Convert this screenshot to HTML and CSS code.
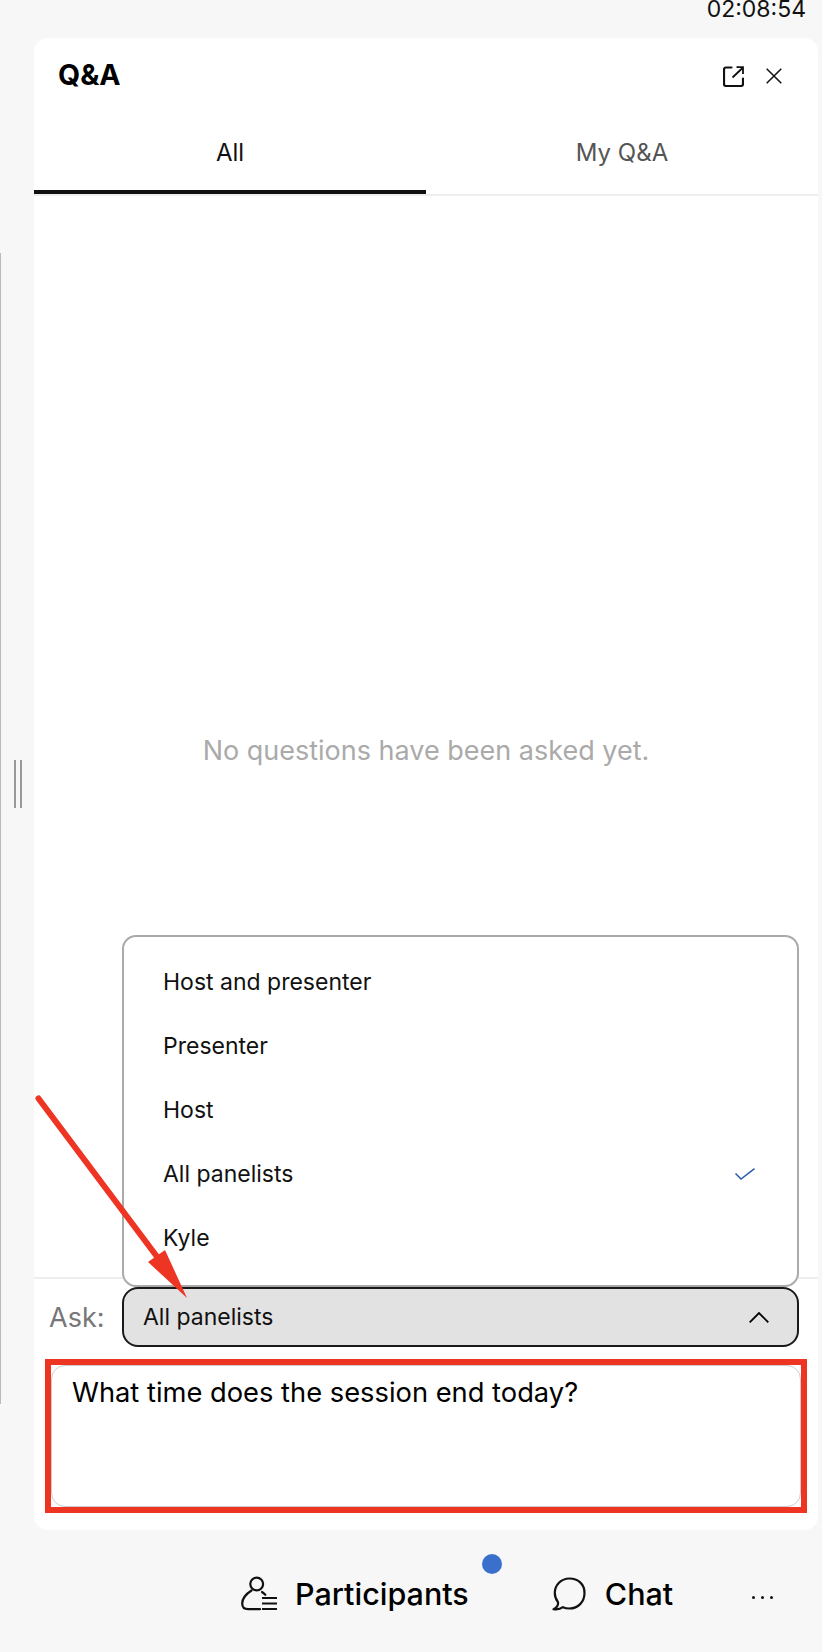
FILE: index.html
```html
<!DOCTYPE html>
<html lang="en">
  <head>
    <meta charset="UTF-8" />
    <meta name="viewport" content="width=device-width, initial-scale=1.0" />
    <title>Q&amp;A</title>
    <link rel="stylesheet" href="styles.css">
  </head>
  <body>
    <div class="timer"><span>02:08:54</span></div>

    <div class="main">
      <div class="side-rail">
        <div class="grip"></div>
      </div>

      <div class="panel">
        <div class="panel-header">
          <h1>Q&amp;A</h1>
          <div class="panel-actions">
            <svg class="popout-icon" viewBox="0 0 21 21" fill="none" stroke="#111" stroke-width="2.200">
              <path d="M8.500 1.500H3a2 2 0 0 0-2 2V18a2 2 0 0 0 2 2h15a2 2 0 0 0 2-2v-5.500" stroke-linecap="round" />
              <path d="M9.500 11.500 19.500 2M13.500 1.200H20V8" stroke-width="1.800" />
            </svg>
            <svg class="close-icon" viewBox="0 0 16 16" fill="none" stroke="#111" stroke-width="1.500">
              <path d="M.7.7l14.600 14.600M15.300.7.700 15.300" />
            </svg>
          </div>
        </div>

        <div class="tabs">
          <div class="tab active">All</div>
          <div class="tab">My Q&amp;A</div>
        </div>

        <div class="question-list">
          <p>No questions have been asked yet.</p>
        </div>

        <div class="ask-row">
          <ul class="ask-menu">
            <li>Host and presenter</li>
            <li>Presenter</li>
            <li>Host</li>
            <li>
              All panelists
              <svg class="check-icon" viewBox="0 0 20 12" fill="none" stroke="#2a5caa" stroke-width="1.500">
                <path d="M.5 5.500 6 11 19.500.7" />
              </svg>
            </li>
            <li>Kyle</li>
          </ul>
          <span class="ask-label">Ask:</span>
          <div class="ask-select">
            <span>All panelists</span>
            <svg class="chevron-icon" viewBox="0 0 20 11" fill="none" stroke="#000" stroke-width="1.800">
              <path d="M.7 10.300 10 1l9.300 9.300" />
            </svg>
          </div>
        </div>

        <div class="highlight-box">
          <div class="question-input">What time does the session end today?</div>
        </div>
      </div>
    </div>

    <div class="toolbar">
      <div class="tool-item">
        <svg class="participants-icon" viewBox="0 0 36 36" fill="none" stroke="#111" stroke-width="2.200">
          <circle cx="15.700" cy="8" r="6.400" />
          <path d="M10.500 14.500C5 18 1.200 23 1.200 27.500c0 3.800 2.500 5.700 6 5.700H19" stroke-linecap="round" />
          <path d="M21 16c1.200.8 2.400 1.800 3.300 2.800" stroke-linecap="round" />
          <path d="M21 22h15M21 27.500h15M21 33h15" />
        </svg>
        <span>Participants</span>
        <i class="notify-dot"></i>
      </div>
      <div class="tool-item chat-item">
        <svg class="chat-icon" viewBox="0 0 34 34" fill="none" stroke="#111" stroke-width="2.200">
          <path d="M17.500 1.500C9 1.500 2.800 8.200 2.800 16c0 3.600 1.200 6.600 3.200 9.200.4 2.600-1.500 5.500-4.500 7 3.600.6 7-.2 9.400-2 2 .9 4.200 1.300 6.600 1.300 8.500 0 15-6.500 15-15.500S26 1.500 17.500 1.500Z" stroke-linejoin="round" />
        </svg>
        <span>Chat</span>
      </div>
      <div class="more-dots"><i></i><i></i><i></i></div>
    </div>

    <svg class="annotation-arrow" viewBox="0 0 822 1652" fill="none">
      <path d="M38.500 1098.500 158 1258" stroke="#ee3524" stroke-width="6" stroke-linecap="round" />
      <path d="M148 1262 165 1250 187 1298Z" fill="#ee3524" />
    </svg>
  </body>
</html>
```

FILE: styles.css
```css
* {
  margin: 0;
  padding: 0;
  box-sizing: border-box;
}

body {
  position: relative;
  width: 822px;
  height: 1652px;
  background: #f7f7f7;
  font-family: Inter, "Liberation Sans", sans-serif;
  color: #111;
  overflow: hidden;
}

.timer {
  height: 38px;
  padding-right: 16px;
  text-align: right;
  font-size: 23px;
  line-height: 18px;
  overflow: hidden;
}

.main {
  display: flex;
  height: 1492px;
}

.side-rail {
  width: 34px;
  height: 1151px;
  margin-top: 215px;
  padding: 507px 0 0 15px;
  border-left: 1px solid #bbb;
}

.grip {
  width: 8px;
  height: 48px;
  margin-left: -2px;
  border-left: 2px solid #999;
  border-right: 2px solid #999;
}

.panel {
  width: 784px;
  display: flex;
  flex-direction: column;
  background: #fff;
  border-radius: 14px;
}

.panel-header {
  height: 76px;
  padding: 0 36px 4px 24px;
  display: flex;
  align-items: center;
  justify-content: space-between;
}

.panel-header h1 {
  font-size: 28.500px;
  font-weight: 700;
  color: #000;
}

.panel-actions {
  display: flex;
  align-items: center;
  gap: 22px;
  padding-top: 4px;
}

.popout-icon {
  width: 21px;
  height: 21px;
}

.close-icon {
  width: 16px;
  height: 16px;
}

.tabs {
  display: flex;
  height: 82px;
  border-bottom: 2px solid #eee;
}

.tab {
  flex: 1;
  height: 80px;
  padding-top: 24px;
  text-align: center;
  font-size: 24px;
  line-height: 30px;
  color: #555;
}

.tab.active {
  height: 80px;
  color: #111;
  border-bottom: 4px solid #111;
}

.question-list {
  flex: 1;
  display: flex;
  align-items: center;
  justify-content: center;
  padding-top: 27px;
}

.question-list p {
  font-size: 27px;
  color: #aaa;
}

.ask-row {
  position: relative;
  height: 82px;
  padding: 9px 19px 13px 15px;
  display: flex;
  align-items: center;
  border-top: 2px solid #eee;
}

.ask-menu {
  position: absolute;
  left: 88px;
  bottom: 72px;
  width: 677px;
  height: 352px;
  padding-top: 13px;
  list-style: none;
  background: #fff;
  border: 2px solid #aaa;
  border-radius: 14px;
}

.ask-menu li {
  height: 64px;
  padding: 0 39px;
  display: flex;
  align-items: center;
  justify-content: space-between;
  font-size: 23px;
}

.check-icon {
  width: 20px;
  height: 12px;
  margin-right: 3px;
}

.ask-label {
  width: 73px;
  font-size: 27px;
  color: #777;
}

.ask-select {
  flex: 1;
  height: 60px;
  padding: 0 28px 0 19px;
  display: flex;
  align-items: center;
  justify-content: space-between;
  background: #e2e2e2;
  border: 2px solid #1a1a1a;
  border-radius: 16px;
  font-size: 23px;
}

.chevron-icon {
  width: 20px;
  height: 11px;
}

.highlight-box {
  height: 154px;
  margin: 0 11px 17px;
  border: 6px solid #ee3524;
}

.question-input {
  height: 100%;
  padding: 11px 20px;
  border: 1px solid #ccc;
  border-radius: 14px;
  font-size: 27.300px;
  line-height: 32px;
  color: #000;
}

.toolbar {
  height: 122px;
  display: flex;
  align-items: flex-start;
  padding: 46px 0 0 241px;
}

.tool-item {
  position: relative;
  display: flex;
  align-items: center;
  font-size: 30.500px;
  font-weight: 500;
  color: #000;
}

.tool-item span {
  margin-top: -1px;
}

.participants-icon {
  width: 36px;
  height: 36px;
  margin-right: 18px;
}

.notify-dot {
  position: absolute;
  right: -33px;
  top: -22px;
  width: 20px;
  height: 20px;
  border-radius: 50%;
  background: #3a70cc;
}

.chat-item {
  margin-left: 83px;
}

.chat-icon {
  width: 34px;
  height: 34px;
  margin-right: 19px;
}

.more-dots {
  margin: 20px 0 0 79px;
  display: flex;
  gap: 6px;
}

.more-dots i {
  width: 3px;
  height: 3px;
  border-radius: 50%;
  background: #111;
}

.annotation-arrow {
  position: absolute;
  left: 0;
  top: 0;
  width: 822px;
  height: 1652px;
  pointer-events: none;
}
```
